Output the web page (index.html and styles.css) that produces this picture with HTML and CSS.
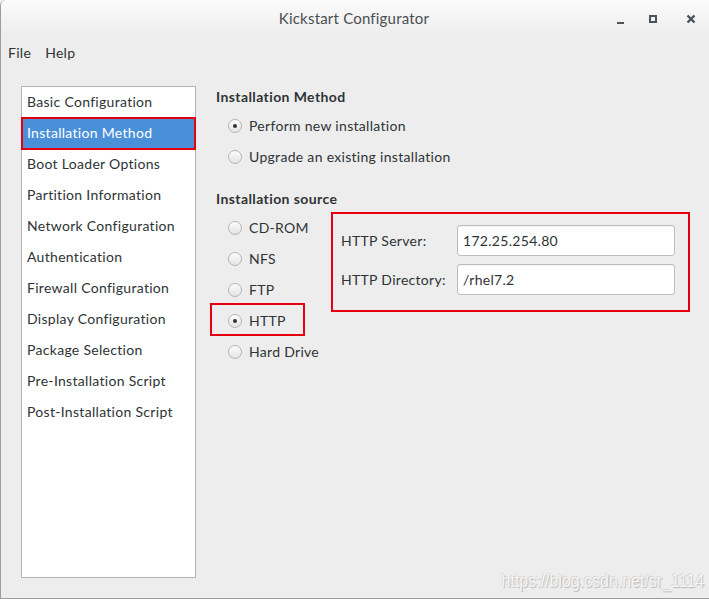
FILE: index.html
```html
<!DOCTYPE html>
<html>
<head>
<meta charset="utf-8">
<title>Kickstart Configurator</title>
<link rel="stylesheet" href="styles.css">
</head>
<body>
<div class="window">
  <header class="titlebar">
    <div class="title">Kickstart Configurator</div>
    <div class="controls">
      <span class="ctl ctl-min"></span>
      <span class="ctl ctl-max"></span>
      <svg class="ctl-close" width="10" height="10" viewBox="0 0 10 10"><path d="M1.5 1.5 L8.5 8.5 M8.5 1.5 L1.5 8.5" stroke="#4a5459" stroke-width="2.4" stroke-linecap="butt"/></svg>
    </div>
  </header>
  <nav class="menubar">
    <span class="menu-item">File</span>
    <span class="menu-item">Help</span>
  </nav>
  <main class="main">
    <ul class="sidebar">
      <li class="side-item">Basic Configuration</li>
      <li class="side-item selected">Installation Method</li>
      <li class="side-item">Boot Loader Options</li>
      <li class="side-item">Partition Information</li>
      <li class="side-item">Network Configuration</li>
      <li class="side-item">Authentication</li>
      <li class="side-item">Firewall Configuration</li>
      <li class="side-item">Display Configuration</li>
      <li class="side-item">Package Selection</li>
      <li class="side-item">Pre-Installation Script</li>
      <li class="side-item">Post-Installation Script</li>
    </ul>
    <section class="content">
      <h2 class="heading">Installation Method</h2>
      <div class="radio-row"><span class="radio checked"></span><span>Perform new installation</span></div>
      <div class="radio-row"><span class="radio"></span><span>Upgrade an existing installation</span></div>

      <h2 class="heading heading-2">Installation source</h2>
      <div class="source">
        <div class="source-list">
          <div class="radio-row"><span class="radio"></span><span>CD-ROM</span></div>
          <div class="radio-row"><span class="radio"></span><span>NFS</span></div>
          <div class="radio-row"><span class="radio"></span><span>FTP</span></div>
          <div class="radio-row marked"><span class="radio checked"></span><span>HTTP</span></div>
          <div class="radio-row"><span class="radio"></span><span>Hard Drive</span></div>
        </div>
        <div class="http-box">
          <label class="field-label">HTTP Server:</label>
          <div class="entry">172.25.254.80</div>
          <label class="field-label">HTTP Directory:</label>
          <div class="entry">/rhel7.2</div>
        </div>
      </div>
    </section>
  </main>
  <div class="watermark">https://blog.csdn.net/sr_1114</div>
</div>
</body>
</html>
```
FILE: styles.css
```css
html, body {
  margin: 0;
  padding: 0;
  background: #ededed;
}
body {
  font-family: Lato, "Noto Sans", sans-serif;
  color: #2e3436;
  font-size: 14px;
  letter-spacing: 0.3px;
}
.window {
  position: relative;
  width: 709px;
  height: 599px;
  box-sizing: border-box;
  border-left: 1px solid #9c9c9c;
  border-bottom: 1px solid #9c9c9c;
  border-top-left-radius: 6px;
  background: #ededed;
  overflow: hidden;
}
.titlebar {
  height: 38px;
  display: flex;
  align-items: center;
  justify-content: center;
  background: linear-gradient(#fbfbfb, #ececec);
  position: relative;
}
.title {
  font-size: 15px;
  color: #4a4f52;
  margin-top: -2px;
  margin-left: -2px;
  letter-spacing: 0.2px;
}
.controls {
  position: absolute;
  right: 13px;
  top: 0;
  height: 38px;
  display: flex;
  align-items: center;
  gap: 0;
}
.ctl {
  display: block;
  box-sizing: border-box;
}
.ctl-min {
  width: 7px;
  height: 2px;
  background: #4a5459;
  margin-top: 7px;
  margin-right: 25px;
}
.ctl-max {
  width: 8px;
  height: 8px;
  border: 2px solid #4a5459;
  margin-right: 29px;
}
.ctl-close {
  display: block;
}
.menubar {
  height: 28px;
  display: flex;
  align-items: center;
  padding-left: 7px;
  gap: 14px;
  font-size: 14px;
}
.main {
  display: flex;
  padding-left: 20px;
  padding-top: 20px;
}
.sidebar {
  list-style: none;
  margin: 0;
  padding: 0;
  width: 175px;
  height: 492px;
  box-sizing: border-box;
  background: #fff;
  border: 1px solid #b3b3b3;
}
.side-item {
  height: 31px;
  line-height: 30px;
  padding-left: 5px;
  white-space: nowrap;
}
.side-item.selected {
  background: #4a90d9;
  color: #fff;
  outline: 2px solid #e5000e;
  outline-offset: -1px;
  position: relative;
}
.content {
  padding-left: 20px;
  padding-top: 1px;
}
.heading {
  margin: 0 0 3px 0;
  font-size: 14px;
  font-weight: bold;
  line-height: 20px;
  letter-spacing: 0.4px;
}
.heading-2 {
  margin-top: 17px;
}
.radio-row {
  display: flex;
  align-items: center;
  height: 31px;
  padding-left: 12px;
  gap: 7px;
  position: relative;
}
.radio {
  width: 14px;
  height: 14px;
  box-sizing: border-box;
  border-radius: 50%;
  border: 1px solid #b4b4b4;
  background: linear-gradient(#fdfdfd, #e3e3e3);
  position: relative;
  flex: none;
}
.radio.checked::after {
  content: "";
  position: absolute;
  width: 4px;
  height: 4px;
  border-radius: 50%;
  background: #2e3436;
  left: 4px;
  top: 4px;
}
.source {
  display: flex;
  align-items: flex-start;
}
.source-list {
  width: 115px;
}
.radio-row.marked::before {
  content: "";
  position: absolute;
  left: -6px;
  top: -2px;
  width: 95px;
  height: 33px;
  box-sizing: border-box;
  border: 2px solid #e5000e;
}
.http-box {
  width: 359px;
  height: 100px;
  box-sizing: border-box;
  border: 2px solid #e5000e;
  padding: 11px 13px 0 8px;
  display: grid;
  grid-template-columns: 116px 218px;
  grid-auto-rows: 31px;
  row-gap: 8px;
  align-content: start;
  align-items: center;
}
.field-label {
  white-space: nowrap;
}
.entry {
  height: 31px;
  box-sizing: border-box;
  border: 1px solid #bdbdbd;
  border-radius: 3px;
  background: #fff;
  box-shadow: inset 0 1px 1px rgba(0,0,0,0.06);
  padding-left: 5px;
  line-height: 29px;
  font-size: 14px;
}
.watermark {
  position: absolute;
  right: 5px;
  bottom: 6px;
  font-family: "Liberation Sans", sans-serif;
  font-size: 19px;
  letter-spacing: 0;
  color: #f6f6f6;
  text-shadow: 1px 1px 1px #b8b8b8, -1px -1px 0 #d8d8d8;
  transform: scaleX(0.84);
  transform-origin: right center;
  white-space: nowrap;
}
```
